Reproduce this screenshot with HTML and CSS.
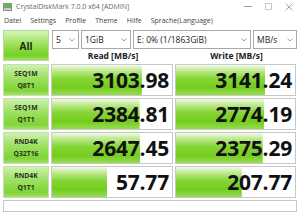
FILE: index.html
```html
<!DOCTYPE html>
<html>
<head>
<meta charset="utf-8">
<title>CrystalDiskMark</title>
<link rel="stylesheet" href="styles.css">
</head>
<body>
<div class="window">
  <div class="titlebar">
    <svg class="appicon" width="9" height="8" viewBox="0 0 9 8">
      <rect x="0" y="0" width="9" height="8" fill="#8a8f96"/>
      <rect x="1" y="1" width="7" height="3" fill="#5fbf3a"/>
      <rect x="1" y="5" width="7" height="2" fill="#c9ccd0"/>
    </svg>
    <span class="title">CrystalDiskMark 7.0.0 x64 [ADMIN]</span>
    <div class="winctl">
      <span class="ctl-min"></span>
      <span class="ctl-max"></span>
      <svg class="ctl-close" width="8" height="8" viewBox="0 0 8 8"><path d="M0.5 0.5L7.5 7.5M7.5 0.5L0.5 7.5" stroke="#9a9a9a" stroke-width="0.9"/></svg>
    </div>
  </div>
  <div class="menubar">
    <span>Datei</span><span>Settings</span><span>Profile</span><span>Theme</span><span>Hilfe</span><span>Sprache(Language)</span>
  </div>
  <div class="main">
    <div class="top">
      <div class="btn-all">All</div>
      <div class="topright">
        <div class="selects">
          <div class="sel sel-count"><span>5</span><svg class="chev" width="6" height="4" viewBox="0 0 6 4"><path d="M0.5 0.5L3 3L5.5 0.5" fill="none" stroke="#888" stroke-width="0.8"/></svg></div>
          <div class="sel sel-size"><span>1GiB</span><svg class="chev" width="6" height="4" viewBox="0 0 6 4"><path d="M0.5 0.5L3 3L5.5 0.5" fill="none" stroke="#888" stroke-width="0.8"/></svg></div>
          <div class="sel sel-drive"><span>E: 0% (1/1863GiB)</span><svg class="chev" width="6" height="4" viewBox="0 0 6 4"><path d="M0.5 0.5L3 3L5.5 0.5" fill="none" stroke="#888" stroke-width="0.8"/></svg></div>
          <div class="sel sel-unit"><span>MB/s</span><svg class="chev" width="6" height="4" viewBox="0 0 6 4"><path d="M0.5 0.5L3 3L5.5 0.5" fill="none" stroke="#888" stroke-width="0.8"/></svg></div>
        </div>
        <div class="heads">
          <span>Read [MB/s]</span>
          <span>Write [MB/s]</span>
        </div>
      </div>
    </div>
    <div class="rows">
      <div class="label"><span>SEQ1M</span><span>Q8T1</span></div>
      <div class="val" style="--p:74.9%"><span>3103.98</span></div>
      <div class="val" style="--p:75.0%"><span>3141.24</span></div>

      <div class="label"><span>SEQ1M</span><span>Q1T1</span></div>
      <div class="val" style="--p:73.0%"><span>2384.81</span></div>
      <div class="val" style="--p:74.1%"><span>2774.19</span></div>

      <div class="label"><span>RND4K</span><span>Q32T16</span></div>
      <div class="val" style="--p:73.7%"><span>2647.45</span></div>
      <div class="val" style="--p:72.9%"><span>2375.29</span></div>

      <div class="label"><span>RND4K</span><span>Q1T1</span></div>
      <div class="val" style="--p:46.0%"><span>57.77</span></div>
      <div class="val" style="--p:55.3%"><span>207.77</span></div>
    </div>
    <div class="comment"></div>
  </div>
</div>
</body>
</html>
```

FILE: styles.css
```css
html, body {
  margin: 0;
  padding: 0;
}
body {
  width: 300px;
  height: 214px;
  overflow: hidden;
  background: #ffffff;
  font-family: "Open Sans", "Noto Sans", sans-serif;
  color: #222;
}
.window {
  width: 300px;
  height: 214px;
  display: flex;
  flex-direction: column;
}
.titlebar {
  height: 13px;
  display: flex;
  align-items: center;
  padding-left: 3px;
}
.appicon {
  margin-right: 4px;
}
.title {
  font-size: 7px;
  color: #6a6a6a;
  white-space: nowrap;
}
.winctl {
  margin-left: auto;
  display: flex;
  align-items: center;
  padding-right: 7px;
  gap: 13px;
}
.ctl-min {
  width: 8px;
  height: 1px;
  background: #a0a0a0;
}
.ctl-max {
  width: 7px;
  height: 7px;
  border: 1px solid #c8c8c8;
  box-sizing: border-box;
}
.menubar {
  height: 15px;
  display: flex;
  align-items: center;
  gap: 9px;
  padding-left: 4px;
  font-size: 7px;
  color: #444;
  white-space: nowrap;
}
.main {
  padding: 2px 3px 0 3px;
  display: flex;
  flex-direction: column;
}
.top {
  display: flex;
  gap: 3px;
  height: 31px;
}
.btn-all {
  width: 46px;
  height: 31px;
  box-sizing: border-box;
  border: 1px solid #b7d9a0;
  background: linear-gradient(#d6f5b8 0%, #aee87a 30%, #86d83a 65%, #78d02a 85%, #9ee060 100%);
  display: flex;
  align-items: center;
  justify-content: center;
  font-weight: 700;
  font-size: 10px;
  color: #1f2a14;
}
.topright {
  flex: 1;
  display: flex;
  flex-direction: column;
}
.selects {
  display: flex;
  gap: 2px;
  height: 19px;
}
.sel {
  box-sizing: border-box;
  border: 1px solid #a9a9a9;
  background: #fff;
  display: flex;
  align-items: center;
  justify-content: space-between;
  padding: 0 3px 0 3px;
  font-size: 8.5px;
  color: #222;
  white-space: nowrap;
}
.chev {
  flex: none;
}
.sel-count { width: 27px; }
.sel-size { width: 50px; }
.sel-drive { width: 118px; }
.sel-unit { width: 44px; }
.heads {
  flex: 1;
  display: grid;
  grid-template-columns: 122px 121px;
  column-gap: 2px;
  align-items: center;
  font-size: 8.5px;
  font-weight: 700;
  color: #222;
  text-align: center;
}
.rows {
  margin-top: 3px;
  display: grid;
  grid-template-columns: 46px 122px 121px;
  grid-auto-rows: 32px;
  column-gap: 2px;
  row-gap: 2px;
}
.label {
  box-sizing: border-box;
  border: 1px solid #c4e0b0;
  background: linear-gradient(#d0f2b0 0%, #a9e578 30%, #8cda46 65%, #80d438 85%, #a4e26a 100%);
  display: flex;
  flex-direction: column;
  align-items: center;
  justify-content: center;
  font-size: 6.8px;
  font-weight: 700;
  line-height: 12px;
  color: #2a3320;
}
.val {
  box-sizing: border-box;
  border: 1px solid #c8c8c8;
  background: linear-gradient(#f2faea 0%, #c2ea94 18%, #86d636 45%, #74cd1e 75%, #98dc50 100%) 0 0 / var(--p) 100% no-repeat, #ffffff;
  display: flex;
  align-items: center;
  justify-content: flex-end;
  padding-right: 3px;
  font-size: 21px;
  font-weight: 700;
  color: #111;
  letter-spacing: -0.2px;
}
.comment {
  margin-top: 2px;
  height: 12px;
  box-sizing: border-box;
  border: 1px solid #c8c8c8;
  background: #fff;
}
```
